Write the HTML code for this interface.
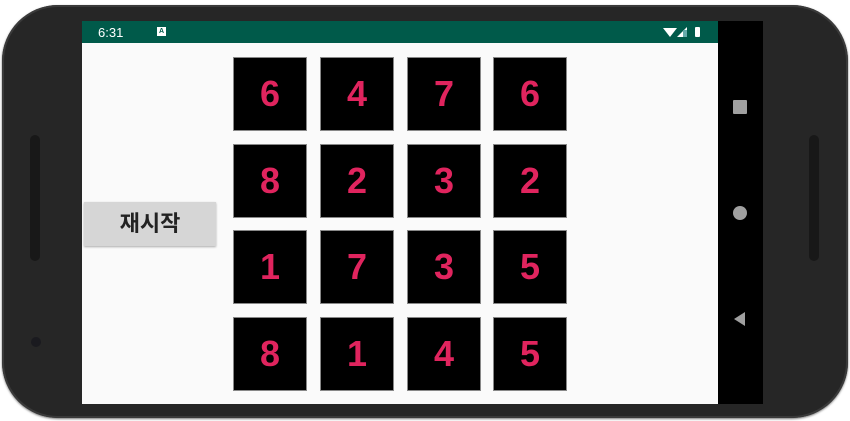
<!DOCTYPE html>
<html><head><meta charset="utf-8"><style>
html,body{margin:0;padding:0;width:850px;height:421px;background:#fff;overflow:hidden;position:relative;font-family:"Liberation Sans","Noto Sans CJK KR",sans-serif}
.phone{position:absolute;left:2px;top:5px;width:846px;height:413px;background:#262626;border-radius:56px;box-shadow:inset 0 0 0 2px #3a3a3a, 0 1px 2px #777}
.screen{position:absolute;left:82px;top:21px;width:636px;height:383px;background:#fafafa}
.status{position:absolute;left:82px;top:21px;width:636px;height:22px;background:#005a4a;color:#fff;font-size:13px}
.nav{position:absolute;left:718px;top:21px;width:45px;height:383px;background:#000}
.tile{position:absolute;width:72px;height:72px;background:#000;color:#e0245e;font-weight:bold;font-size:36px;line-height:72px;text-align:center;box-shadow:0 0 0 1px #888}
.btn{position:absolute;left:84px;top:202px;width:132px;height:44px;background:#d6d6d6;font-size:22px;font-weight:bold;line-height:44px;text-align:center;color:#222;box-shadow:0 1px 2px #aaa}
.grille{position:absolute;width:10px;height:126px;border-radius:5px;background:#181818}
</style></head><body>
<div class="phone"></div>
<div class="grille" style="left:30px;top:135px"></div>
<div class="grille" style="left:809px;top:135px"></div>
<div style="position:absolute;left:31px;top:337px;width:10px;height:10px;border-radius:50%;background:#1a1a1f"></div>
<div class="screen"></div>
<div class="status"><span style="position:absolute;left:16px;top:4px">6:31</span>
<span style="position:absolute;left:75px;top:6px;width:9px;height:9px;background:#fff;color:#005a4a;font-size:7px;line-height:9px;text-align:center;font-weight:bold">A</span>
<svg style="position:absolute;left:581px;top:5px" width="45" height="13"><path d="M0 2 L14 2 L7 11 Z" fill="#fff"/><path d="M14 11 L24 11 L24 1 Z" fill="#fff"/><rect x="20" y="4" width="4" height="7" fill="#6aa"/><rect x="32" y="1" width="5" height="10" rx="1" fill="#fff"/></svg>
</div>
<div class="nav">
<div style="position:absolute;left:15px;top:79px;width:14px;height:14px;background:#a0a0a0;border-radius:1px"></div>
<div style="position:absolute;left:15px;top:185px;width:14px;height:14px;background:#a0a0a0;border-radius:50%"></div>
<svg style="position:absolute;left:14px;top:290px" width="16" height="16"><path d="M13 1 L13 15 L2 8 Z" fill="#a0a0a0"/></svg>
</div>
<div class="btn">재시작</div>
<div class="tile" style="left:234px;top:58px">6</div>
<div class="tile" style="left:321px;top:58px">4</div>
<div class="tile" style="left:408px;top:58px">7</div>
<div class="tile" style="left:494px;top:58px">6</div>
<div class="tile" style="left:234px;top:145px">8</div>
<div class="tile" style="left:321px;top:145px">2</div>
<div class="tile" style="left:408px;top:145px">3</div>
<div class="tile" style="left:494px;top:145px">2</div>
<div class="tile" style="left:234px;top:231px">1</div>
<div class="tile" style="left:321px;top:231px">7</div>
<div class="tile" style="left:408px;top:231px">3</div>
<div class="tile" style="left:494px;top:231px">5</div>
<div class="tile" style="left:234px;top:318px">8</div>
<div class="tile" style="left:321px;top:318px">1</div>
<div class="tile" style="left:408px;top:318px">4</div>
<div class="tile" style="left:494px;top:318px">5</div>
</body></html>
